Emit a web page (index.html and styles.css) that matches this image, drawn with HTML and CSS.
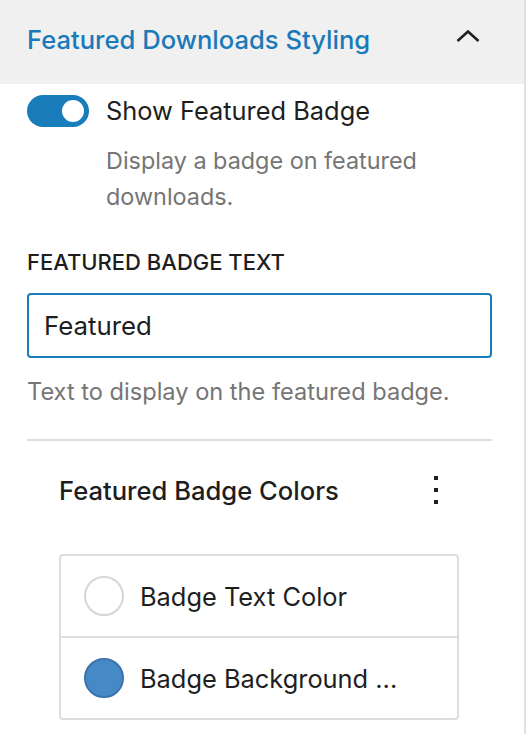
FILE: index.html
```html
<!DOCTYPE html>
<html>
<head>
<meta charset="utf-8">
<link rel="stylesheet" href="styles.css">
</head>
<body>
<div class="sidebar">
  <div class="panel-header">
    <span class="panel-title">Featured Downloads Styling</span>
    <svg class="chevron" width="24" height="24" viewBox="0 0 24 24"><path d="M1.5 17 L12 7.5 L22.5 17" fill="none" stroke="#1e1e1e" stroke-width="2.6"/></svg>
  </div>
  <div class="panel-body">
    <div class="toggle-row">
      <span class="toggle"><span class="knob"></span></span>
      <span class="toggle-label">Show Featured Badge</span>
    </div>
    <p class="toggle-help">Display a badge on featured downloads.</p>

    <label class="field-label">FEATURED BADGE TEXT</label>
    <div class="text-input">Featured</div>
    <p class="field-help">Text to display on the featured badge.</p>

    <div class="divider"></div>

    <div class="colors">
      <div class="colors-header">
        <span class="colors-title">Featured Badge Colors</span>
        <span class="kebab"><i></i><i></i><i></i></span>
      </div>
      <div class="color-list">
        <div class="color-row">
          <span class="swatch swatch-empty"></span>
          <span class="color-name">Badge Text Color</span>
        </div>
        <div class="color-row">
          <span class="swatch swatch-blue"></span>
          <span class="color-name">Badge Background ...</span>
        </div>
      </div>
    </div>
  </div>
</div>
</body>
</html>
```
FILE: styles.css
```css
html, body {
  margin: 0;
  padding: 0;
  background: #fff;
}
body {
  font-family: Inter, "Noto Sans", "Liberation Sans", sans-serif;
  color: #1e1e1e;
}
.sidebar {
  width: 524px;
  min-height: 734px;
  border-right: 2px solid #e0e0e0;
  box-sizing: content-box;
}
.panel-header {
  height: 84px;
  background: #f0f0f0;
  display: flex;
  align-items: center;
  justify-content: space-between;
  padding: 0 44px 0 27px;
  box-sizing: border-box;
}
.panel-title {
  font-size: 25.6px;
  line-height: 32px;
  font-weight: 500;
  color: #1a7ab9;
  margin-top: -4px;
}
.chevron {
  margin-top: -12px;
}
.panel-body {
  padding: 11px 32px 0 27px;
}
.toggle-row {
  display: flex;
  align-items: center;
  gap: 17px;
}
.toggle {
  width: 62px;
  height: 32px;
  border-radius: 16px;
  background: #187dba;
  position: relative;
  flex: none;
}
.knob {
  position: absolute;
  right: 5px;
  top: 5px;
  width: 22px;
  height: 22px;
  border-radius: 50%;
  background: #fff;
}
.toggle-label {
  font-size: 25.4px;
  line-height: 32px;
}
.toggle-help {
  margin: 16px 0 0 79px;
  font-size: 23.4px;
  line-height: 36px;
  color: #757575;
}
.field-label {
  display: block;
  margin-top: 35px;
  font-size: 22px;
  font-weight: 500;
  line-height: 24px;
}
.text-input {
  margin-top: 19px;
  height: 65px;
  border: 2px solid #187dba;
  border-radius: 4px;
  box-sizing: border-box;
  padding: 0 15px;
  display: flex;
  align-items: center;
  font-size: 25.8px;
  color: #1e1e1e;
}
.field-help {
  margin: 21px 0 0;
  font-size: 23.6px;
  line-height: 26px;
  color: #757575;
}
.divider {
  margin-top: 34px;
  height: 2px;
  background: #dddddd;
}
.colors {
  padding: 0 33px 0 32px;
}
.colors-header {
  display: flex;
  align-items: center;
  justify-content: space-between;
  margin-top: 34px;
  height: 30px;
}
.colors-title {
  font-size: 25.6px;
  font-weight: 500;
}
.kebab {
  display: flex;
  flex-direction: column;
  gap: 8px;
  margin-right: 21px;
}
.kebab i {
  display: block;
  width: 4px;
  height: 4px;
  background: #1e1e1e;
}
.color-list {
  margin-top: 49px;
  width: 400px;
  border: 2px solid #dddddd;
  border-radius: 4px;
  box-sizing: border-box;
}
.color-row {
  height: 80px;
  display: flex;
  align-items: center;
  padding-left: 23px;
  gap: 16px;
}
.color-row + .color-row {
  border-top: 2px solid #dddddd;
}
.swatch {
  width: 40px;
  height: 40px;
  border-radius: 50%;
  box-sizing: border-box;
  flex: none;
}
.swatch-empty {
  border: 2px solid #d6d6d6;
  background: #fff;
}
.swatch-blue {
  background: #4589c6;
  border: 2px solid #3b74a9;
}
.color-name {
  font-size: 25.4px;
}
```
